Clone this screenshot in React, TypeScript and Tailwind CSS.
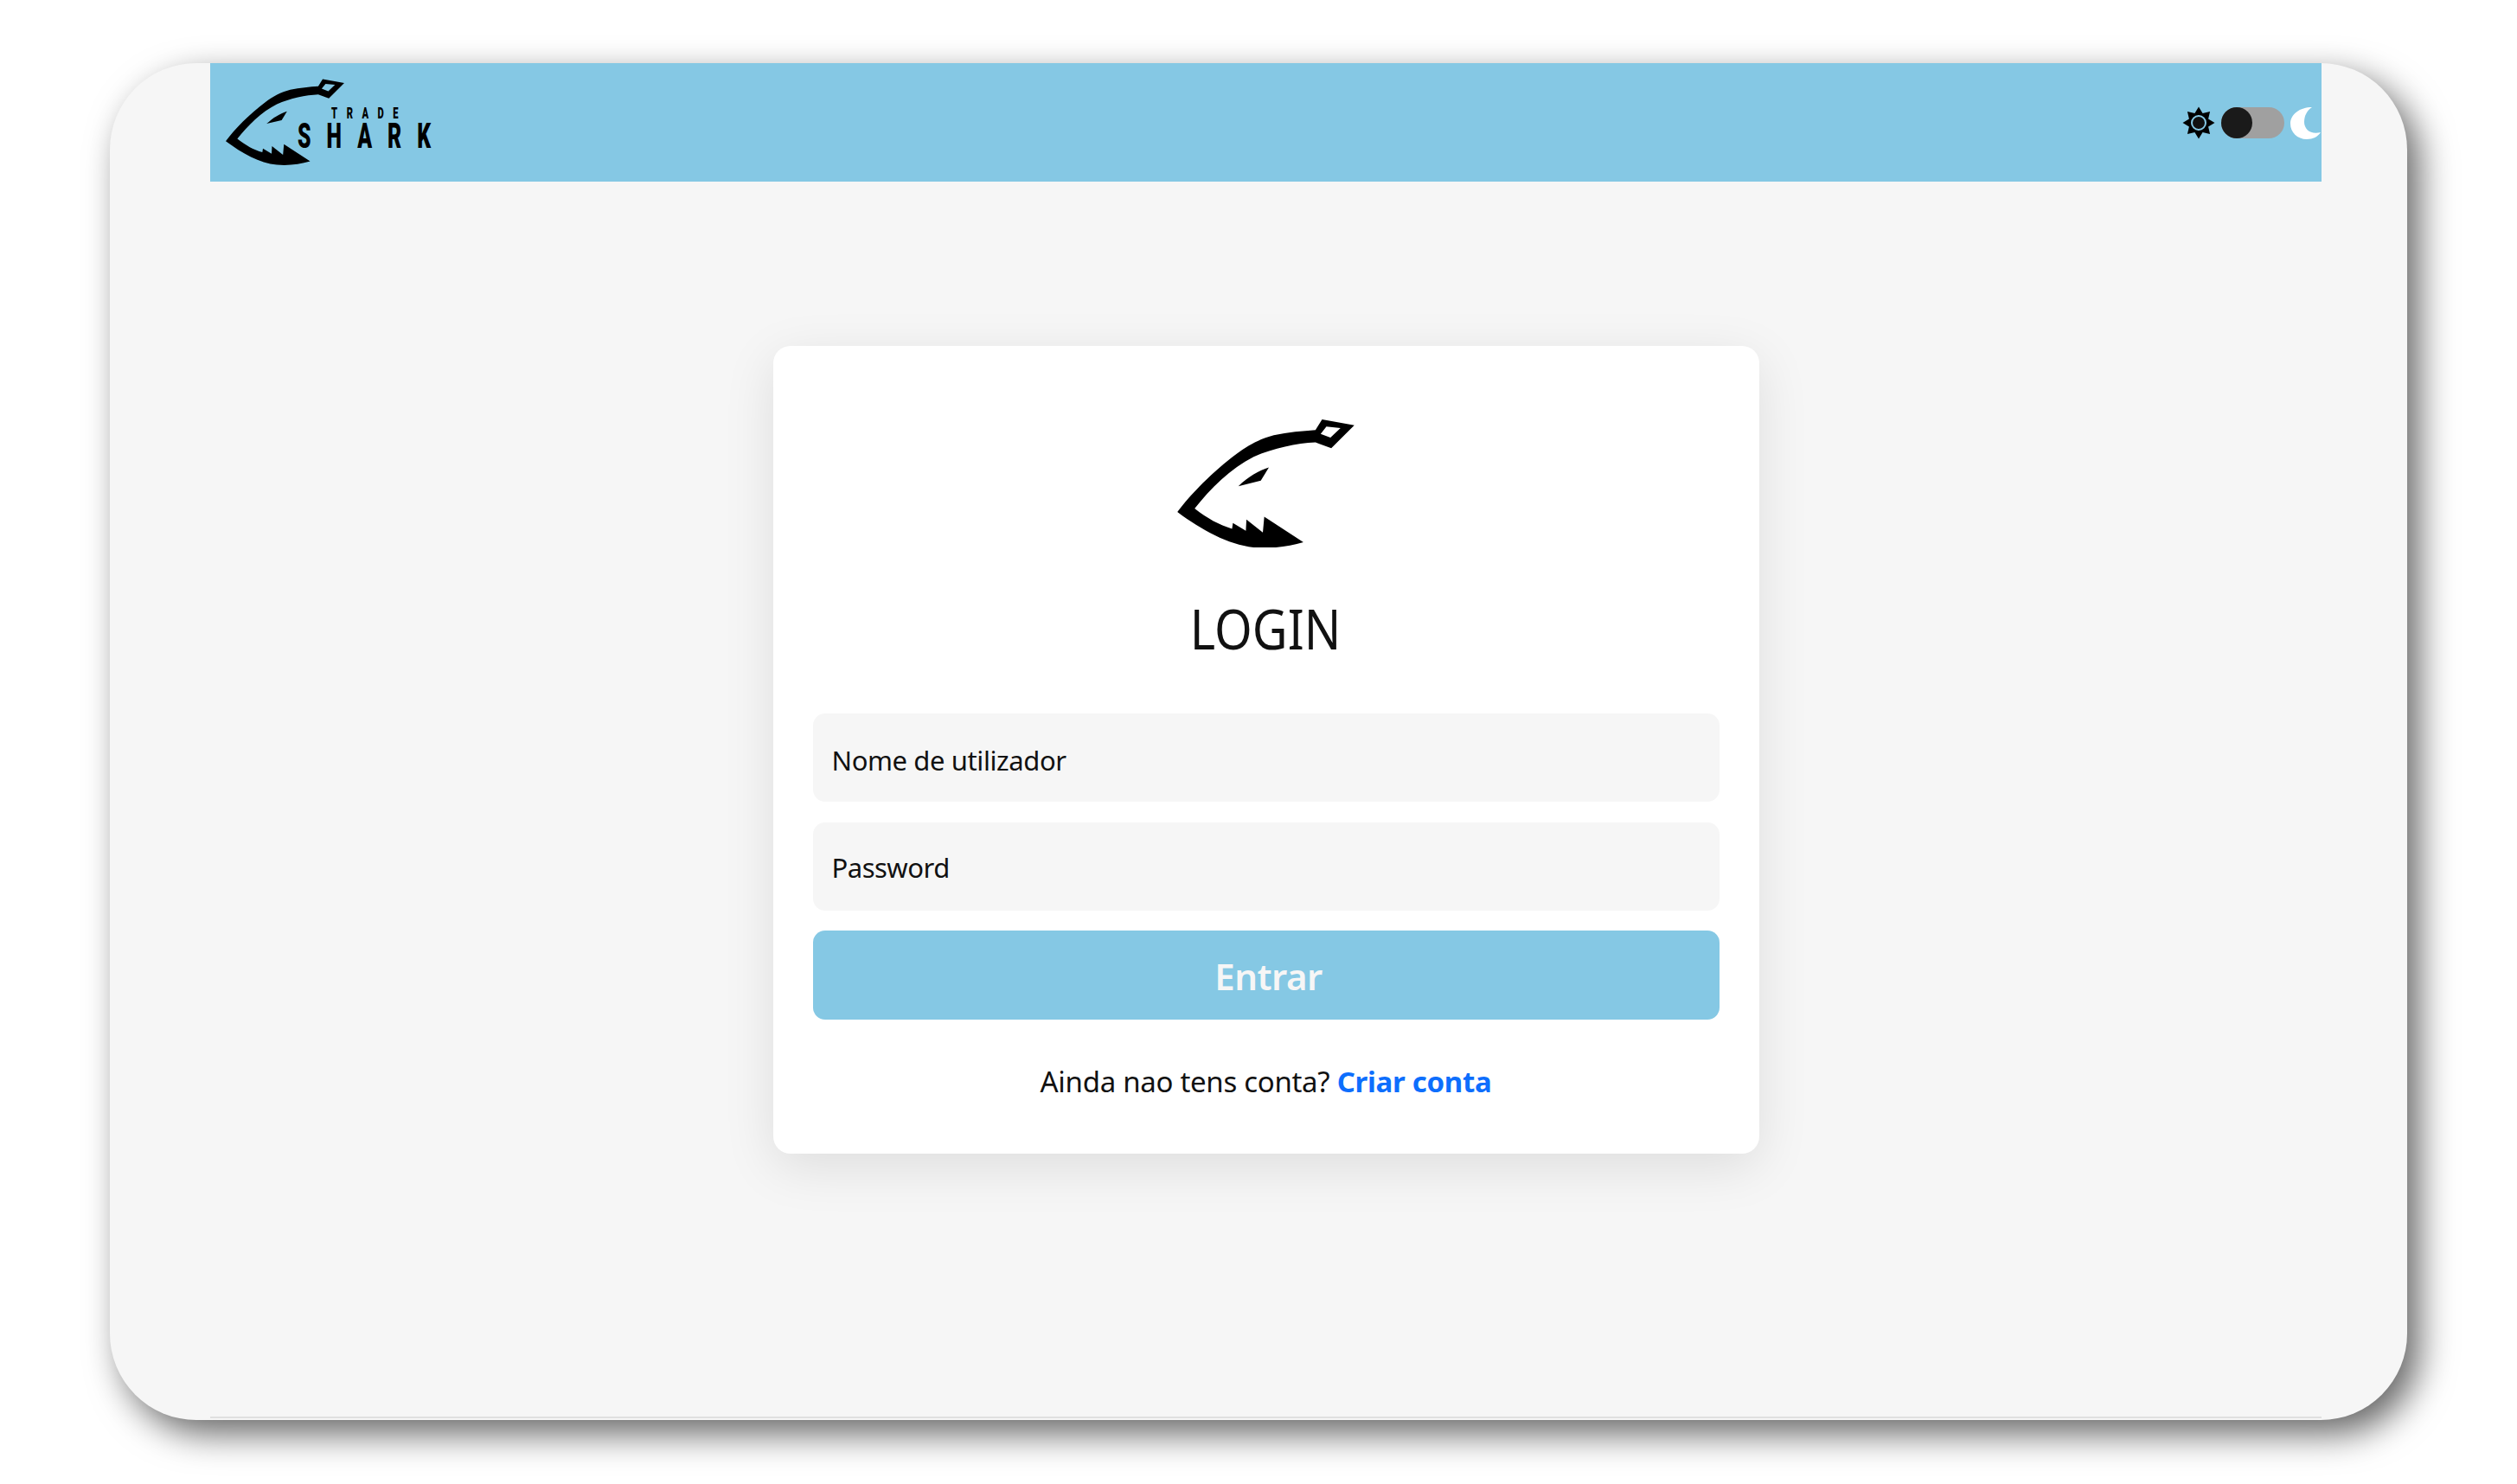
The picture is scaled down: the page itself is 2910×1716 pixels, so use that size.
const SHARK_PATH =
  "M65 367 C110 305 190 225 270 165 C310 135 350 113 400 100 C450 90 500 85 545 82 L568 45 L680 65 L600 145 L545 125 C480 128 400 145 330 175 C250 215 180 285 125 355 C170 390 210 412 255 425 L258 405 L303 432 L305 393 L362 438 L367 383 L503 472 C450 488 390 495 330 490 C240 480 150 430 65 367 Z M583 70 L563 95 L597 108 L632 75 Z M383 212 C350 222 310 245 277 277 L355 258 Z";

function SharkMark({ className }: { className: string }) {
  return (
    <svg viewBox="65 45 615 445" className={className}>
      <path d={SHARK_PATH} fill="#000" fillRule="evenodd" />
    </svg>
  );
}

function Sun() {
  const points: string[] = [];
  for (let i = 0; i < 16; i++) {
    const r = i % 2 === 0 ? 18.5 : 12;
    const a = (i * Math.PI) / 8 - Math.PI / 2;
    points.push(`${19 + r * Math.cos(a)},${19 + r * Math.sin(a)}`);
  }
  return (
    <svg viewBox="0 0 38 38" className="w-[38px] h-[38px]">
      <polygon points={points.join(" ")} fill="#000" />
      <circle cx="19" cy="19" r="8" fill="#111" stroke="#85c8e4" strokeWidth="2" />
    </svg>
  );
}

function Moon() {
  return (
    <svg viewBox="0 0 36 38" className="w-[36px] h-[38px] shrink-0">
      <path
        d="M25 1 C11 1 0 9 0 20 C0 30 8 38 19 38 C26 38 32 35 35 30 C24 33 16 27 16 18 C16 11 19 5 25 1 Z"
        fill="#fff"
      />
    </svg>
  );
}

function Header() {
  return (
    <header className="h-[137px] shrink-0 bg-[#85c8e4] flex items-center justify-between">
      <div className="relative ml-[18px] mt-[-1px] w-[240px] h-[100px]">
        <SharkMark className="w-[137px] h-[100px]" />
        <div className="absolute left-[83px] top-[31px] origin-top-left scale-x-[0.62] font-['Roboto',sans-serif] font-black text-black whitespace-nowrap">
          <p className="ml-[63px] text-[18px] leading-[18px] tracking-[17px]">TRADE</p>
          <p className="text-[40px] leading-[35px] tracking-[29px]">SHARK</p>
        </div>
      </div>
      <div className="flex items-center gap-[7px]">
        <Sun />
        <div className="w-[73px] h-[36px] rounded-full bg-[#a0a0a0]">
          <div className="w-[36px] h-[36px] rounded-full bg-[#1a1a1a]" />
        </div>
        <Moon />
      </div>
    </header>
  );
}

function LoginCard() {
  return (
    <div className="w-[1140px] h-[934px] mt-[190px] bg-white rounded-[20px] shadow-[0_15px_60px_rgba(0,0,0,0.1)] px-[46px] pt-[85px] flex flex-col items-center font-['Noto_Sans',sans-serif]">
      <SharkMark className="w-[205px] h-[148px]" />
      <h1 className="mt-[52px] text-[63px] leading-[84px] scale-x-[0.89] text-[#111]">LOGIN</h1>
      <input
        placeholder="Nome de utilizador"
        className="mt-[56px] w-full h-[102px] rounded-[14px] bg-[#f6f6f6] px-[22px] pt-[6px] text-[31px] tracking-[-0.4px] placeholder:text-[#111] outline-none"
      />
      <input
        placeholder="Password"
        className="mt-[24px] w-full h-[102px] rounded-[14px] bg-[#f6f6f6] px-[22px] pt-[2px] text-[31px] tracking-[-0.5px] placeholder:text-[#111] outline-none"
      />
      <button
        type="button"
        className="mt-[23px] w-full h-[103px] rounded-[14px] bg-[#85c8e4] text-[#f6f6f6] text-[42px] font-semibold tracking-[-0.5px] pl-[6px] pt-[2px]"
      >
        Entrar
      </button>
      <p className="mt-[49px] text-[33px] leading-[46px] tracking-[-0.3px] text-[#111]">
        Ainda nao tens conta?{" "}
        <a className="text-[#0d6efd] font-bold">Criar conta</a>
      </p>
    </div>
  );
}

export default function App() {
  return (
    <div className="w-[2910px] h-[1716px] bg-white pt-[73px] pl-[127px] overflow-hidden">
      <div className="w-[2656px] h-[1569px] rounded-[100px] bg-[#f6f6f6] shadow-[14px_16px_40px_rgba(0,0,0,0.6)] pl-[116px] pb-[2px] flex">
        <div className="w-[2441px] flex flex-col border-b-2 border-[#e0e0e0]">
          <Header />
          <main className="flex-1 flex justify-center items-start">
            <LoginCard />
          </main>
        </div>
      </div>
    </div>
  );
}
